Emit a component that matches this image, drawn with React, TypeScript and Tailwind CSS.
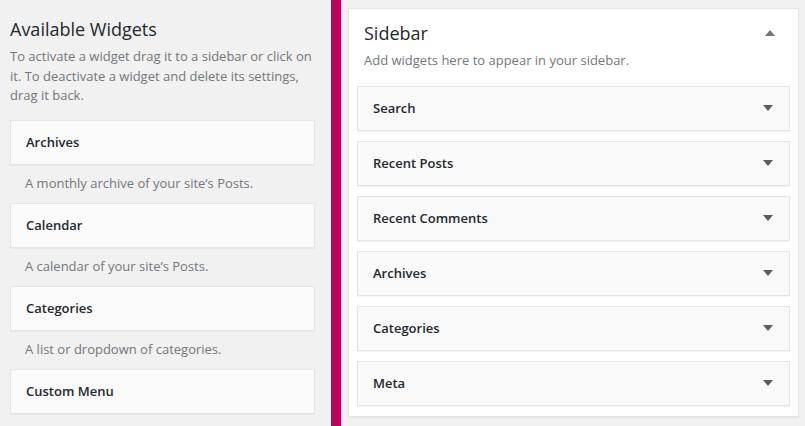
const available = [
  { title: "Archives", desc: "A monthly archive of your site\u2019s Posts." },
  { title: "Calendar", desc: "A calendar of your site\u2019s Posts." },
  { title: "Categories", desc: "A list or dropdown of categories." },
  { title: "Custom Menu", desc: "" },
];

const sidebarWidgets = ["Search", "Recent Posts", "Recent Comments", "Archives", "Categories", "Meta"];

function Arrow({ up }: { up?: boolean }) {
  return (
    <svg width="10" height="6" viewBox="0 0 10 6" className="shrink-0">
      {up ? <path d="M0 6 L5 0 L10 6 Z" fill="#72777c" /> : <path d="M0 0 L10 0 L5 6 Z" fill="#555d66" />}
    </svg>
  );
}

export default function App() {
  return (
    <div
      className="flex w-[805px] h-[426px] overflow-hidden bg-[#f1f1f1] text-[#23282d]"
      style={{ fontFamily: '"Open Sans", "Noto Sans", sans-serif' }}
    >
      {/* Available widgets */}
      <div className="w-[305px] ml-[10px] shrink-0">
        <h2 className="mt-[17px] text-[18px] leading-[24px] font-normal">Available Widgets</h2>
        <p className="mt-[6px] text-[13px] leading-[19.5px] text-[#72777c]">
          To activate a widget drag it to a sidebar or click on it. To deactivate a widget and delete its settings,
          drag it back.
        </p>
        <div className="mt-[14px]">
          {available.map((w) => (
            <div key={w.title}>
              <div className="h-[45px] flex items-center px-[15px] pt-[2px] bg-[#fafafa] border border-[#e5e5e5] shadow-[0_1px_1px_rgba(0,0,0,0.04)]">
                <span className="text-[13px] font-semibold">{w.title}</span>
              </div>
              {w.desc && (
                <div className="h-[38px] flex items-center px-[15px] pt-[1px] text-[13px] text-[#72777c]">{w.desc}</div>
              )}
            </div>
          ))}
        </div>
      </div>

      {/* drop zone marker */}
      <div className="w-[10px] ml-[16px] bg-[#c0005d] shrink-0" />

      {/* Sidebar */}
      <div className="ml-[7px] mt-[8px] w-[451px] h-[409px] bg-white border border-[#e5e5e5] shadow-[0_1px_1px_rgba(0,0,0,0.04)] shrink-0">
        <div className="flex items-center justify-between pl-[15px] pr-[23px] mt-[12px]">
          <h2 className="text-[18px] leading-[24px] font-normal">Sidebar</h2>
          <Arrow up />
        </div>
        <p className="mt-[6px] px-[15px] text-[13px] leading-[19.5px] text-[#72777c]">
          Add widgets here to appear in your sidebar.
        </p>
        <div className="mt-[15px] mx-[8px] flex flex-col gap-[10px]">
          {sidebarWidgets.map((name) => (
            <div
              key={name}
              className="h-[45px] flex items-center justify-between pl-[15px] pr-[16px] bg-[#f9f9f9] border border-[#e5e5e5] shadow-[0_1px_1px_rgba(0,0,0,0.04)]"
            >
              <span className="text-[13px] font-semibold pt-[2px]">{name}</span>
              <Arrow />
            </div>
          ))}
        </div>
      </div>
    </div>
  );
}
